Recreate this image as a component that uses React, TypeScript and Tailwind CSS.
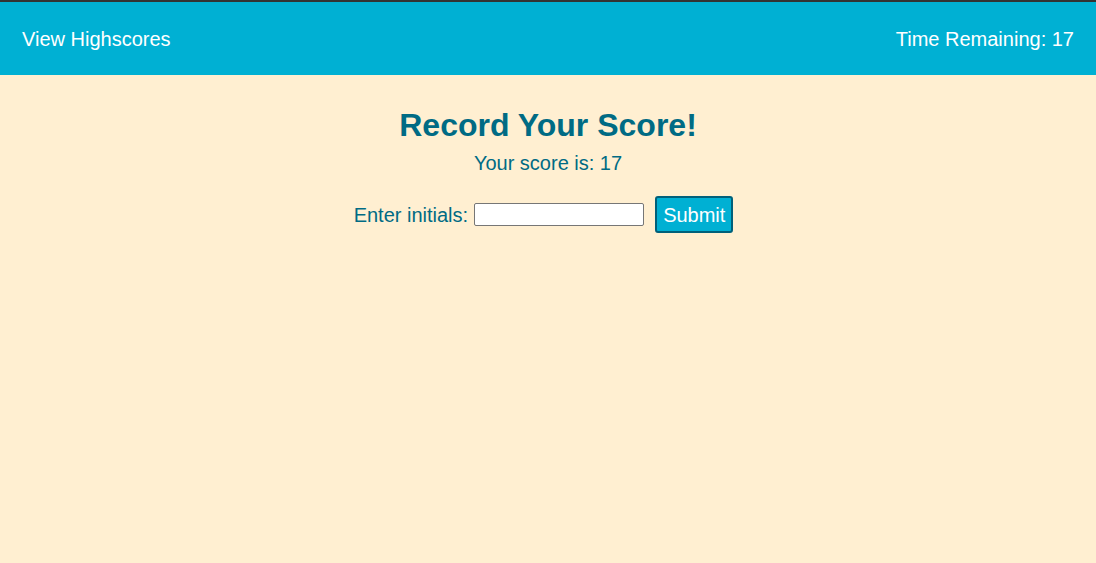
import { useState } from 'react'

export default function App() {
  const [initials, setInitials] = useState('')

  return (
    <div className="min-h-[563px] bg-[#ffefd1] font-['Liberation_Sans',Arial,sans-serif] border-t-2 border-[#333333]">
      <header className="h-[73px] bg-[#00b0d3] px-[22px] flex items-center justify-between text-white text-[20px]">
        <a href="#" className="leading-none">View Highscores</a>
        <span className="leading-none">Time Remaining: 17</span>
      </header>

      <main className="flex flex-col items-center pt-[34px] text-[#006b84]">
        <h1 className="text-[32px] font-bold leading-none">Record Your Score!</h1>
        <p className="mt-[12px] text-[20px] leading-none">Your score is: 17</p>

        <form
          className="mt-[23px] mr-[9px] flex items-center text-[20px]"
          onSubmit={(e) => e.preventDefault()}
        >
          <label htmlFor="initials" className="leading-none">Enter initials:</label>
          <input
            id="initials"
            value={initials}
            onChange={(e) => setInitials(e.target.value)}
            className="ml-[6px] w-[170px] h-[23px] bg-white border border-[#767676] rounded-[2px] px-1 text-[14px] text-black"
          />
          <button
            type="submit"
            className="ml-[11px] h-[37px] px-[6px] bg-[#00b0d3] text-white text-[20px] border-2 border-[#00607a] rounded-[3px]"
          >
            Submit
          </button>
        </form>
      </main>
    </div>
  )
}
